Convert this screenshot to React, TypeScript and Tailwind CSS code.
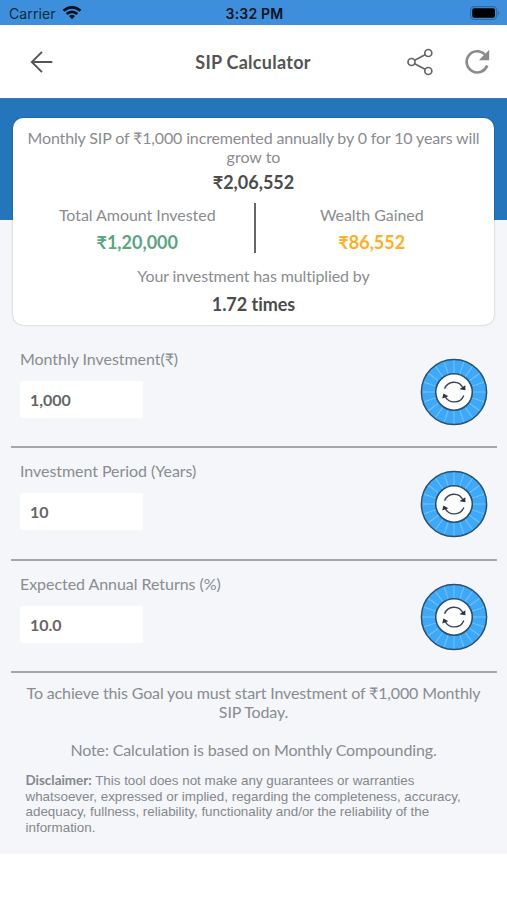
import { useState } from "react";

const initialFields = [
  { key: "amount", label: "Monthly Investment(₹)", value: "1,000" },
  { key: "period", label: "Investment Period (Years)", value: "10" },
  { key: "returns", label: "Expected Annual Returns (%)", value: "10.0" },
];

const spokes = [...Array(20)].map((_, i) => i * 18);

function StatusBar() {
  return (
    <div className="grid h-[25px] grid-cols-3 items-center bg-[#3d8fdb] pl-[9px] pr-[7px] pt-[2px] font-['Inter','Liberation_Sans',sans-serif]">
      <div className="flex items-center gap-[6px]">
        <span className="text-[14px] leading-5 tracking-[0.1px] text-[#0b2a40]">Carrier</span>
        <svg width="20" height="15" viewBox="0 0 20 15" className="-mt-[2px]" fill="none" stroke="#04121e" strokeWidth="2.7">
          <path d="M1.6 5.8a12 12 0 0 1 16.8 0" />
          <path d="M4.7 9a7.6 7.6 0 0 1 10.6 0" />
          <path d="M10 14.2l-3-3.1a4.3 4.3 0 0 1 6 0z" fill="#04121e" stroke="none" />
        </svg>
      </div>
      <span className="text-center text-[14px] font-semibold leading-5 tracking-[0.2px] text-[#04121e]">
        3:32 PM
      </span>
      <svg width="30" height="14" viewBox="0 0 30 14" className="-mt-[2px] justify-self-end">
        <rect x="0.6" y="0.6" width="26" height="12.8" rx="3.6" fill="#3d8fdb" stroke="#286ca5" strokeWidth="1.2" />
        <rect x="2.2" y="2.2" width="22.8" height="9.6" rx="2" fill="#000" />
        <path d="M28 4.8c1.8.7 1.8 3.7 0 4.4z" fill="#286ca5" />
      </svg>
    </div>
  );
}

function Header() {
  return (
    <header className="flex h-[73px] items-center bg-white">
      <button className="ml-[29px] flex w-[70px]" aria-label="Back">
        <svg width="24" height="22" viewBox="0 0 24 22" fill="none" stroke="#555" strokeWidth="1.9">
          <path d="M13 0.8L2.8 11L13 21.2M2.8 11H23.3" />
        </svg>
      </button>
      <h1 className="flex-1 text-center text-[18px] font-bold leading-6 tracking-[0.27px] text-[#555]">
        SIP Calculator
      </h1>
      <div className="flex w-[100px] items-center gap-[30px]">
        <button aria-label="Share">
          <svg width="27" height="28" viewBox="0 0 27 28" fill="none" stroke="#666" strokeWidth="1.7">
            <circle cx="4.5" cy="14" r="3.5" />
            <circle cx="21.3" cy="5" r="3.5" />
            <circle cx="21.3" cy="23" r="3.5" />
            <path d="M7.7 12.3L18.1 6.7M7.7 15.7L18.1 21.3" />
          </svg>
        </button>
        <button aria-label="Reset">
          <svg width="26" height="26" viewBox="0 0 26 26">
            <path d="M20.8 5.4A10.6 10.6 0 1 0 23.2 16.5" fill="none" stroke="#8b8b8b" strokeWidth="2.7" />
            <path d="M25.2 0.8V11.2H14.8z" fill="#8b8b8b" />
          </svg>
        </button>
      </div>
    </header>
  );
}

function Dial() {
  return (
    <svg width="68" height="68" viewBox="0 0 68 68">
      <circle cx="34" cy="34" r="32.6" fill="#3fa9f9" stroke="#2b506f" strokeWidth="1.5" />
      {spokes.map((deg) => (
        <path key={deg} d="M34 2.5V15" stroke="#74c3fb" strokeWidth="1" transform={`rotate(${deg} 34 34)`} />
      ))}
      <circle cx="34" cy="34" r="18.3" fill="#fff" stroke="#2b506f" strokeWidth="1.6" />
      <g fill="none" stroke="#3a4555" strokeWidth="1.4">
        <path d="M24.6 30.8A10 10 0 0 1 43 30" />
        <path d="M43.8 37.4A10.3 10.3 0 0 1 25 38.2" />
      </g>
      <path d="M45.4 27.2V32.2L39.4 31.2z" fill="#2a3444" />
      <path d="M22.2 40.6L23.4 35.6L28.4 38.2z" fill="#2a3444" />
    </svg>
  );
}

function SummaryCard() {
  return (
    <section className="relative mx-[13px] -mt-[102px] h-[207px] rounded-[10px] bg-white pt-[10px] text-center text-[16px] leading-[19px] text-[#8a8c8f] shadow-[0_0_2px_rgba(0,0,0,0.3)]">
      <p className="tracking-[-0.14px]">
        Monthly SIP of ₹1,000 incremented annually by 0 for 10 years will
        <br />
        <span className="tracking-normal">grow to</span>
      </p>
      <p className="mt-[5px] text-[18px] font-bold leading-[22px] text-[#4c4c4c]">₹2,06,552</p>
      <div className="mt-[10px] flex h-[50px] items-stretch pl-[8px] pr-[6px]">
        <div className="flex-1 pt-[2px]">
          <p className="tracking-[-0.05px]">Total Amount Invested</p>
          <p className="mt-[7px] text-[18px] font-bold leading-[22px] text-[#58a581]">₹1,20,000</p>
        </div>
        <div className="w-[2px] bg-[#666]" />
        <div className="flex-1 pt-[2px]">
          <p className="tracking-[-0.05px]">Wealth Gained</p>
          <p className="mt-[7px] text-[18px] font-bold leading-[22px] text-[#fdb022]">₹86,552</p>
        </div>
      </div>
      <p className="mt-[13px] tracking-[-0.12px]">Your investment has multiplied by</p>
      <p className="mt-[8px] text-[18px] font-bold leading-[22px] tracking-[-0.03px] text-[#4c4c4c]">
        1.72 times
      </p>
    </section>
  );
}

export default function App() {
  const [fields, setFields] = useState(initialFields);

  const update = (key: string, value: string) =>
    setFields(fields.map((f) => (f.key === key ? { ...f, value } : f)));

  return (
    <div className="h-[900px] w-full overflow-hidden bg-white font-['Lato','Noto_Sans',sans-serif]">
      <StatusBar />
      <Header />

      <main className="h-[756px] bg-[#f4f6fa]">
        <div className="h-[122px] border-t border-[#3b79ae] bg-[#2475bb]" />
        <SummaryCard />

        {/* Inputs */}
        <div className="ml-[11px] mr-[10px] mt-[10.5px]">
          {fields.map((f) => (
            <div
              key={f.key}
              className="flex h-[112.5px] items-start justify-between border-b-2 border-[#a3a6ab] pl-[9px] pr-[9px]"
            >
              <label className="flex flex-col pt-[13px] text-[16px] leading-[19px] tracking-[-0.05px] text-[#8a8c8f]">
                {f.label}
                <input
                  value={f.value}
                  onChange={(e) => update(f.key, e.target.value)}
                  className="mt-[13px] h-[37px] w-[123px] rounded-[3px] bg-white px-[10px] text-[16px] font-bold text-[#666] outline-none"
                />
              </label>
              <div className="pt-[22px]">
                <Dial />
              </div>
            </div>
          ))}
        </div>

        {/* Notes */}
        <div className="pt-[10px] text-center text-[16px] leading-[19px] tracking-[-0.14px] text-[#8a8c8f]">
          <p>
            To achieve this Goal you must start Investment of ₹1,000 Monthly
            <br />
            SIP Today.
          </p>
          <p className="mt-[19px]">Note: Calculation is based on Monthly Compounding.</p>
        </div>
        <p className="ml-[25.5px] mt-[14px] whitespace-nowrap font-['Liberation_Sans',Arial,sans-serif] text-[13.4px] leading-[15.5px] text-[#85888b]">
          <b className="font-['Lato',sans-serif]">Disclaimer:</b> This tool does not make any guarantees or warranties
          <br />
          whatsoever, expressed or implied, regarding the completeness, accuracy,
          <br />
          adequacy, fullness, reliability, functionality and/or the reliability of the
          <br />
          information.
        </p>
      </main>
    </div>
  );
}
